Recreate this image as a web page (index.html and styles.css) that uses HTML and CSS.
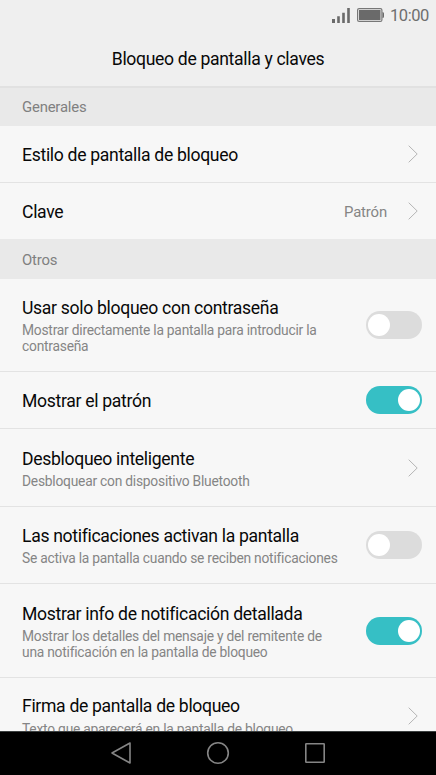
FILE: index.html
```
<!DOCTYPE html>
<html lang="es">
<head>
<meta charset="utf-8">
<title>Bloqueo de pantalla y claves</title>
<link rel="stylesheet" href="styles.css">
</head>
<body>
<div class="screen">
  <div class="status">
    <svg class="signal" width="18" height="15" viewBox="0 0 18 15"><path d="M0 11h3v4H0zM5.2 8.2h2.6V15H5.2zM10.2 4.7h2.6V15h-2.6zM15.2 0h2.6v15h-2.6z"/></svg>
    <svg class="battery" width="27" height="14" viewBox="0 0 27 14"><rect class="case" x=".6" y=".6" width="24.3" height="12.8" rx="1.5"/><path d="M2 2h21.500v10H2zM25.5 4q1.500 0 1.500 1.500v3q0 1.500-1.500 1.500z"/></svg>
    <span class="clock">10:00</span>
  </div>
  <header class="header"><h1>Bloqueo de pantalla y claves</h1></header>
  <main class="list">
    <h2 class="section">Generales</h2>
    <div class="row single">
      <div class="label"><div class="name">Estilo de pantalla de bloqueo</div></div>
      <svg class="chevron" width="10" height="18" viewBox="0 0 10 18"><path d="M.7.7 9.200 9 .7 17.300"/></svg>
    </div>
    <div class="row single last">
      <div class="label"><div class="name">Clave</div></div>
      <span class="value">Patrón</span>
      <svg class="chevron" width="10" height="18" viewBox="0 0 10 18"><path d="M.7.7 9.200 9 .7 17.300"/></svg>
    </div>
    <h2 class="section others">Otros</h2>
    <div class="row triple">
      <div class="label"><div class="name">Usar solo bloqueo con contraseña</div><div class="desc">Mostrar directamente la pantalla para introducir la<br>contraseña</div></div>
      <span class="toggle"></span>
    </div>
    <div class="row single">
      <div class="label"><div class="name">Mostrar el patrón</div></div>
      <span class="toggle on"></span>
    </div>
    <div class="row double">
      <div class="label"><div class="name">Desbloqueo inteligente</div><div class="desc">Desbloquear con dispositivo Bluetooth</div></div>
      <svg class="chevron" width="10" height="18" viewBox="0 0 10 18"><path d="M.7.7 9.200 9 .7 17.300"/></svg>
    </div>
    <div class="row double short">
      <div class="label"><div class="name">Las notificaciones activan la pantalla</div><div class="desc">Se activa la pantalla cuando se reciben notificaciones</div></div>
      <span class="toggle"></span>
    </div>
    <div class="row triple tall">
      <div class="label"><div class="name">Mostrar info de notificación detallada</div><div class="desc">Mostrar los detalles del mensaje y del remitente de<br>una notificación en la pantalla de bloqueo</div></div>
      <span class="toggle on"></span>
    </div>
    <div class="row double signature">
      <div class="label"><div class="name">Firma de pantalla de bloqueo</div><div class="desc">Texto que aparecerá en la pantalla de bloqueo</div></div>
      <svg class="chevron" width="10" height="18" viewBox="0 0 10 18"><path d="M.7.7 9.200 9 .7 17.300"/></svg>
    </div>
  </main>
  <nav class="nav">
    <svg width="22" height="24" viewBox="0 0 22 24"><path d="M20 2v20L2 12z"/></svg>
    <svg width="24" height="24" viewBox="0 0 24 24"><circle cx="12" cy="12" r="10.300"/></svg>
    <svg width="22" height="24" viewBox="0 0 22 24"><rect x="1.800" y="2.800" width="18.400" height="18.400" rx=".5"/></svg>
  </nav>
</div>
</body>
</html>
```
FILE: styles.css
```
* { box-sizing: border-box; }
body { margin: 0; font-family: Roboto, "Liberation Sans", sans-serif; color: #080808; }
svg { display: block; flex: none; }
h1, h2 { margin: 0; font-weight: 400; }
.screen { width: 436px; height: 775px; overflow: hidden; display: flex; flex-direction: column; background: #f7f7f7; }
.status { flex: none; height: 30px; background: #efefef; display: flex; align-items: center; justify-content: flex-end; padding-right: 7px; color: #6e6e6e; }
.status svg { fill: #6a6a6a; }
.signal { margin-right: 7px; }
.battery { margin-right: 6px; }
.battery .case { fill: none; stroke: #777; stroke-width: 1.2; }
.clock { font-size: 16.5px; line-height: 20px; letter-spacing: -0.4px; padding-top: 1px; }
.header { flex: none; height: 58px; background: #efefef; border-bottom: 2px solid #e1e1e1; display: flex; align-items: center; justify-content: center; }
.header h1 { font-size: 17.6px; line-height: 22px; letter-spacing: -0.33px; padding-top: 2px; }
.list { flex: 1; min-height: 0; overflow: hidden; }
.section { height: 38px; padding: 0 22px; display: flex; align-items: center; font-size: 14.9px; letter-spacing: -0.2px; background: #e9e9e9; color: #808080; }
.others { height: 40px; padding-top: 2px; }
.row { display: flex; align-items: center; padding: 0 14px 0 22px; border-bottom: 1px solid #e3e3e3; }
.label { flex: 1; white-space: nowrap; }
.name { font-size: 17.6px; line-height: 22px; letter-spacing: -0.32px; }
.desc { font-size: 13.8px; line-height: 16px; padding-top: 3px; letter-spacing: -0.23px; color: #858585; }
.single { height: 57px; }
.single .label, .single .value { padding-top: 2px; }
.last { height: 56px; border-bottom: 0; }
.double { height: 78px; }
.double .label, .triple .label { padding-top: 1px; }
.signature .label { padding-top: 0; }
.signature .desc { padding-top: 4px; }
.short { height: 77px; }
.triple { height: 93px; }
.tall { height: 94px; }
.signature { height: 77px; }
.chevron { margin-right: 4px; fill: none; stroke: #b5b5b5; stroke-width: 1; }
.value { font-size: 14.9px; letter-spacing: -0.15px; color: #858585; margin-right: 21px; }
.toggle { flex: none; width: 56px; height: 28px; padding: 3px 2px; border-radius: 14px; background: #dcdcdc; display: flex; }
.toggle::before { content: ""; width: 22px; height: 22px; border-radius: 50%; background: #fff; }
.toggle.on { background: #36bfc5; justify-content: flex-end; }
.nav { flex: none; height: 44px; background: #000; border: solid #3c4040; border-width: 1px 0 0; padding-bottom: 1px; display: flex; align-items: center; justify-content: center; gap: 74px; }
.nav svg { fill: none; stroke: #858585; stroke-width: 1.6; stroke-linejoin: round; }
```
